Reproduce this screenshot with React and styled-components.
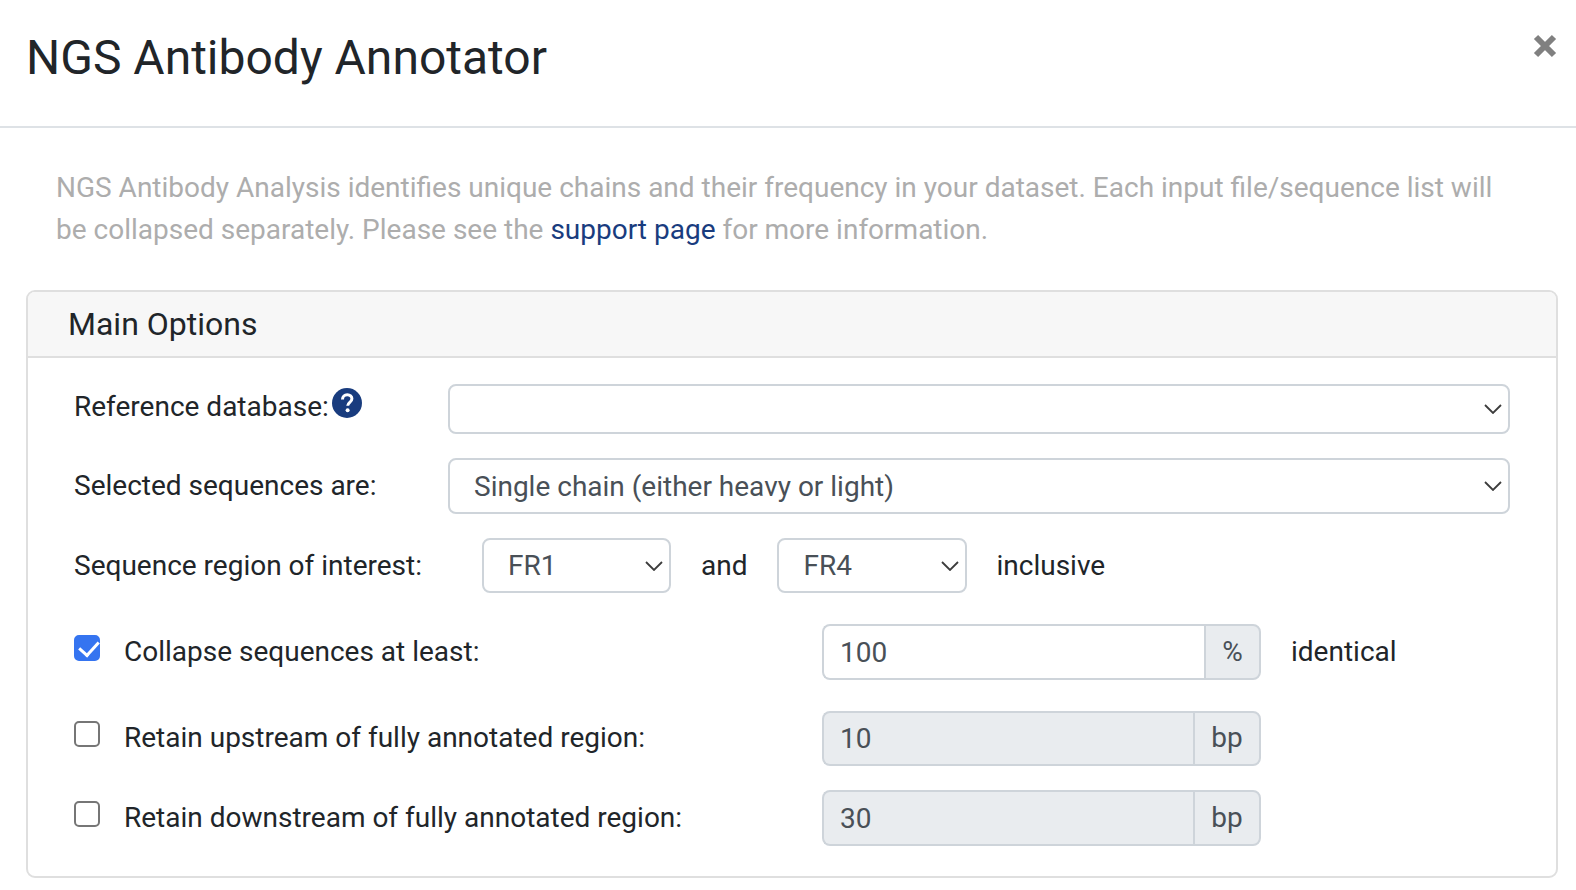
import React from 'react';
import styled, { createGlobalStyle } from 'styled-components';

const GlobalStyle = createGlobalStyle`
  html, body {
    margin: 0;
    padding: 0;
    background: #fff;
    overflow: hidden;
  }
  body {
    font-family: Roboto, "Liberation Sans", sans-serif;
    color: #212529;
  }
  * { box-sizing: border-box; }
`;

const Modal = styled.div`
  width: 1576px;
  height: 890px;
`;

const Header = styled.header`
  display: flex;
  justify-content: space-between;
  align-items: flex-start;
  height: 128px;
  padding: 29px 19px 0 26px;
  border-bottom: 2px solid #dee2e6;
`;

const Title = styled.h1`
  margin: 0;
  font-size: 48px;
  font-weight: 400;
  line-height: 58px;
`;

const CloseButton = styled.button`
  display: flex;
  margin: 5px 0 0 0;
  padding: 0;
  border: 0;
  background: none;
  color: #808080;
`;

const Intro = styled.p`
  margin: 0;
  padding: 39px 60px 0 56px;
  font-size: 28px;
  line-height: 42px;
  color: #adadad;
`;

const SupportLink = styled.a`
  color: #193c7e;
  text-decoration: none;
`;

const Card = styled.section`
  width: 1532px;
  height: 588px;
  margin: 39px 0 0 26px;
  border: 2px solid #dfdfdf;
  border-radius: 9px;
  overflow: hidden;
`;

const CardHeader = styled.h2`
  margin: 0;
  height: 66px;
  padding: 0 0 0 40px;
  font-size: 32px;
  font-weight: 400;
  line-height: 64px;
  background: #f7f7f7;
  border-bottom: 2px solid #dfdfdf;
`;

const CardBody = styled.div`
  padding: 26px 46px 0 46px;
  display: flex;
  flex-direction: column;
`;

const Row = styled.div`
  display: flex;
  align-items: center;
  height: ${(p) => p.$height}px;
  margin-bottom: ${(p) => p.$gap}px;
`;

const RowLabel = styled.label`
  display: flex;
  align-items: center;
  flex: none;
  width: ${(p) => p.$width}px;
  font-size: 28px;
  line-height: 42px;
`;

const RaisedLabel = styled(RowLabel)`
  margin-top: -4px;
`;

const HelpIcon = styled.svg`
  width: 30px;
  height: 30px;
  margin: -8px 0 0 3px;
`;

const SelectWrap = styled.div`
  position: relative;
  display: flex;
  flex: ${(p) => (p.$width ? 'none' : '1')};
  width: ${(p) => (p.$width ? `${p.$width}px` : 'auto')};
  height: 100%;
`;

const Select = styled.select`
  width: 100%;
  height: 100%;
  padding: 0 40px 0 24px;
  appearance: none;
  font: 400 28px Roboto, sans-serif;
  color: #495057;
  background: #fff;
  border: 2px solid #ced4da;
  border-radius: 8px;
`;

const Chevron = styled.svg`
  position: absolute;
  top: 50%;
  right: 8px;
  width: 18px;
  height: 10px;
  margin-top: -5px;
  pointer-events: none;
`;

const Word = styled.span`
  font-size: 28px;
  line-height: 42px;
  margin: 0 ${(p) => p.$right || 0}px 0 ${(p) => p.$left || 0}px;
`;

const Check = styled.input`
  flex: none;
  position: relative;
  appearance: none;
  width: 26px;
  height: 26px;
  margin: ${(p) => (p.$lift ? -10 : -8)}px 24px 0 0;
  background: #fff;
  border: 2px solid #767676;
  border-radius: 5px;

  &:checked {
    background: #3574f0;
    border-color: #3574f0;
  }

  &:checked::after {
    content: '';
    position: absolute;
    left: 6.5px;
    top: 0;
    width: 9px;
    height: 16px;
    border: solid #fff;
    border-width: 0 3.5px 3.5px 0;
    transform: rotate(42deg);
  }
`;

const CheckLabel = styled.label`
  flex: none;
  width: 698px;
  margin-top: ${(p) => (p.$lift ? -2 : 0)}px;
  font-size: 28px;
  line-height: 42px;
`;

const InputGroup = styled.div`
  display: flex;
  flex: none;
  width: 439px;
  height: 100%;
`;

const NumberInput = styled.input`
  flex: 1;
  min-width: 0;
  height: 100%;
  padding: 0 16px;
  font: 400 28px Roboto, sans-serif;
  color: #495057;
  background: ${(p) => (p.disabled ? '#e9ecef' : '#fff')};
  border: 2px solid #ced4da;
  border-right: 0;
  border-radius: 8px 0 0 8px;
`;

const Addon = styled.span`
  display: flex;
  align-items: center;
  justify-content: center;
  flex: none;
  width: ${(p) => p.$width}px;
  padding-bottom: 2px;
  font-size: 28px;
  color: #495057;
  background: #e9ecef;
  border: 2px solid #ced4da;
  border-radius: 0 8px 8px 0;
`;

const CloseIcon = () => (
  <svg width="24" height="24" viewBox="0 0 24 24">
    <path d="M3 3 L21 21 M21 3 L3 21" stroke="currentColor" strokeWidth="6" />
  </svg>
);

const Help = () => (
  <HelpIcon viewBox="0 0 30 30">
    <circle cx="15" cy="15" r="15" fill="#193c7e" />
    <path d="M10.5 11.5c0-3 2-4.8 4.8-4.8s4.6 1.7 4.6 4c0 3.6-4.2 3.6-4.2 7" fill="none" stroke="#fff" strokeWidth="3" />
    <circle cx="15.6" cy="22.3" r="2" fill="#fff" />
  </HelpIcon>
);

const Dropdown = ({ width, value }) => (
  <SelectWrap $width={width}>
    <Select defaultValue={value}>
      <option value={value}>{value}</option>
    </Select>
    <Chevron viewBox="0 0 18 10">
      <path d="M1 1 L9 9 L17 1" fill="none" stroke="#3c3c3c" strokeWidth="1.8" />
    </Chevron>
  </SelectWrap>
);

const App = () => (
  <Modal>
    <GlobalStyle />
    <Header>
      <Title>NGS Antibody Annotator</Title>
      <CloseButton aria-label="Close">
        <CloseIcon />
      </CloseButton>
    </Header>
    <Intro>
      NGS Antibody Analysis identifies unique chains and their frequency in your dataset. Each input file/sequence list will
      <br />
      be collapsed separately. Please see the <SupportLink href="#">support page</SupportLink> for more information.
    </Intro>
    <Card>
      <CardHeader>Main Options</CardHeader>
      <CardBody>
        <Row $height={50} $gap={24}>
          <RaisedLabel $width={374}>
            Reference database:
            <Help />
          </RaisedLabel>
          <Dropdown value="" />
        </Row>
        <Row $height={56} $gap={24}>
          <RowLabel $width={374}>Selected sequences are:</RowLabel>
          <Dropdown value="Single chain (either heavy or light)" />
        </Row>
        <Row $height={55} $gap={31}>
          <RowLabel $width={408}>Sequence region of interest:</RowLabel>
          <Dropdown width={189} value="FR1" />
          <Word $left={30} $right={30}>and</Word>
          <Dropdown width={190} value="FR4" />
          <Word $left={29}>inclusive</Word>
        </Row>
        <Row $height={56} $gap={31}>
          <Check type="checkbox" defaultChecked />
          <CheckLabel>Collapse sequences at least:</CheckLabel>
          <InputGroup>
            <NumberInput defaultValue="100" />
            <Addon $width={57}>%</Addon>
          </InputGroup>
          <Word $left={30}>identical</Word>
        </Row>
        <Row $height={55} $gap={24}>
          <Check type="checkbox" $lift />
          <CheckLabel $lift>Retain upstream of fully annotated region:</CheckLabel>
          <InputGroup>
            <NumberInput defaultValue="10" disabled />
            <Addon $width={68}>bp</Addon>
          </InputGroup>
        </Row>
        <Row $height={56} $gap={0}>
          <Check type="checkbox" />
          <CheckLabel>Retain downstream of fully annotated region:</CheckLabel>
          <InputGroup>
            <NumberInput defaultValue="30" disabled />
            <Addon $width={68}>bp</Addon>
          </InputGroup>
        </Row>
      </CardBody>
    </Card>
  </Modal>
);

export default App;
